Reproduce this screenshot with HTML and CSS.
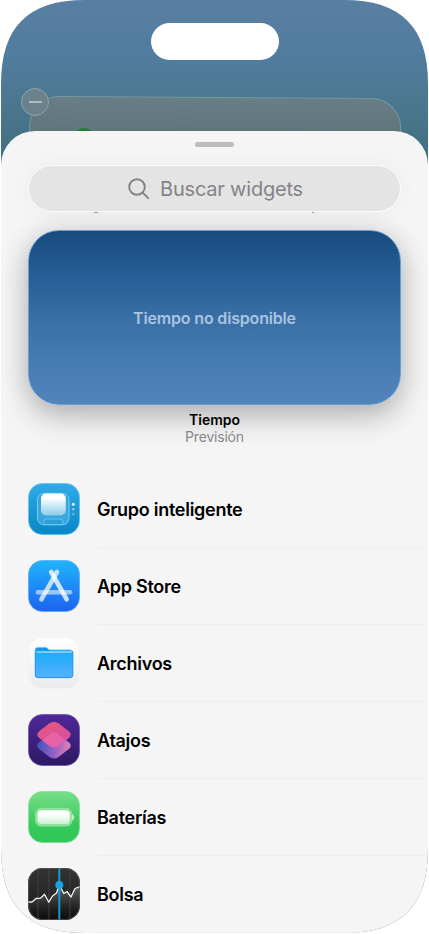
FILE: index.html
```html
<!DOCTYPE html>
<html lang="es">
  <head>
    <meta charset="UTF-8" />
    <meta name="viewport" content="width=device-width, initial-scale=1.0" />
    <title>Widgets</title>
    <link rel="stylesheet" href="styles.css">
  </head>
  <body>
    <div class="phone">
      <div class="island"></div>
      <div class="home-widget"><span class="home-dot"></span></div>
      <div class="remove"></div>

      <div class="sheet">
        <div class="grabber"></div>
        <div class="search">
          <svg class="search-icon" viewBox="0 0 22 22">
            <circle cx="9" cy="9" r="7.8" />
            <path d="M14.7 14.7L20.2 20.2" />
          </svg>
          <span class="search-text">Buscar widgets</span>
          <i class="peek peek-left"></i>
          <i class="peek peek-right"></i>
        </div>

        <div class="weather"><span class="weather-text">Tiempo no disponible</span></div>
        <div class="caption">
          <strong class="caption-title">Tiempo</strong>
          <span class="caption-sub">Previsión</span>
        </div>

        <ul class="apps">
          <li class="app">
            <svg class="icon" viewBox="0 0 52 52">
              <defs>
                <linearGradient id="stackBg" x1="0" y1="0" x2="0" y2="1"><stop offset="0" stop-color="#32aae8" /><stop offset="1" stop-color="#0687c6" /></linearGradient>
                <linearGradient id="stackCard" x1="0" y1="0" x2="0" y2="1"><stop offset="0.2" stop-color="#fff" /><stop offset="1" stop-color="#8bcceb" /></linearGradient>
              </defs>
              <rect class="edge" x="0.5" y="0.5" width="51" height="51" rx="14" fill="url(#stackBg)" stroke="#5cc0f0" />
              <rect x="9.5" y="10.3" width="31.5" height="31.5" rx="6.5" fill="#38a5dc" stroke="#74cdf3" />
              <path d="M16 41.5v-2.5q0-3 3-3h13q3 0 3 3v2.5z" fill="#2d9fd7" stroke="#74cdf3" stroke-width="0.8" />
              <rect x="13" y="10.5" width="24.8" height="22" rx="5" fill="url(#stackCard)" />
              <circle cx="45.3" cy="21.2" r="1.5" fill="#e4f6ff" />
              <circle cx="45.3" cy="26.2" r="1.3" fill="#84ccef" />
              <circle cx="45.3" cy="31.1" r="1.3" fill="#5fb9e4" />
            </svg>
            <span class="name">Grupo inteligente</span>
          </li>
          <li class="app">
            <svg class="icon" viewBox="0 0 52 52">
              <defs>
                <linearGradient id="storeBg" x1="0" y1="0" x2="0" y2="1"><stop offset="0" stop-color="#20b4fb" /><stop offset="1" stop-color="#1d63f0" /></linearGradient>
              </defs>
              <rect class="edge" x="0.5" y="0.5" width="51" height="51" rx="14" fill="url(#storeBg)" stroke="#4fabff" />
              <g fill="none" stroke="#fff" stroke-width="4.6" stroke-linecap="round">
                <path d="M10 32.2H42" stroke-opacity="0.55" />
                <path d="M29 12L13.4 39.3" stroke-opacity="0.72" />
                <path d="M23.2 12L38.7 39.3" stroke-opacity="0.78" />
              </g>
            </svg>
            <span class="name">App Store</span>
          </li>
          <li class="app">
            <svg class="icon" viewBox="0 0 52 52">
              <defs>
                <linearGradient id="filesBg" x1="0" y1="0" x2="0" y2="1"><stop offset="0" stop-color="#fff" /><stop offset="1" stop-color="#ebebee" /></linearGradient>
                <linearGradient id="folder" x1="0" y1="0" x2="0" y2="1"><stop offset="0" stop-color="#19aefa" /><stop offset="1" stop-color="#56b0fe" /></linearGradient>
              </defs>
              <rect class="edge" x="0.5" y="0.5" width="51" height="51" rx="14" fill="url(#filesBg)" stroke="#f0f0f1" />
              <path d="M7 38V13q0-2.8 2.8-2.8h7.4q1.6 0 2.6 1.3t2.6 1.3H42q3 0 3 3V38q0 3-3 3H10q-3 0-3-3z" fill="#1499ee" stroke="#b9dcfc" stroke-width="0.6" />
              <path d="M7.3 14.8H44.8V38q0 2.6-2.8 2.6H10q-2.7 0-2.7-2.6z" fill="url(#folder)" stroke="#258fee" stroke-width="0.8" />
              <path d="M8.4 15H43.8" stroke="#98dcff" stroke-width="1.4" />
            </svg>
            <span class="name">Archivos</span>
          </li>
          <li class="app">
            <svg class="icon" viewBox="0 0 52 52">
              <defs>
                <linearGradient id="cutsBg" x1="0" y1="0" x2="0" y2="1"><stop offset="0" stop-color="#50289a" /><stop offset="1" stop-color="#2b1962" /></linearGradient>
                <linearGradient id="cutsTop" x1="0" y1="0" x2="0.4" y2="1"><stop offset="0" stop-color="#ea5a72" /><stop offset="1" stop-color="#d44cab" /></linearGradient>
                <linearGradient id="cutsBottom" x1="0" y1="0.4" x2="1" y2="0.5"><stop offset="0" stop-color="#4053bd" /><stop offset="0.5" stop-color="#8e5fc6" /><stop offset="1" stop-color="#e77fb6" /></linearGradient>
              </defs>
              <rect class="edge" x="0.5" y="0.5" width="51" height="51" rx="14" fill="url(#cutsBg)" stroke="#6c48ac" />
              <path d="M11.5 28L21.5 20.5q4.5-3.2 9 0L40.5 28q4.6 3.6 0 7.2L30.5 42.9q-4.5 3.2-9 0L11.5 35.2q-4.6-3.6 0-7.2z" fill="url(#cutsBottom)" />
              <path d="M11.5 17L21.5 9.3q4.5-3.2 9 0L40.5 17q4.6 3.6 0 7.2L30.5 31.9q-4.5 3.2-9 0L11.5 24.2q-4.6-3.6 0-7.2z" fill="url(#cutsTop)" />
              <path d="M26 18.2q2.4 0 4.5 2.3L37.8 26.2 30.5 31.9q-4.5 3.2-9 0L14.2 26.2 21.5 20.5q2.1-2.3 4.5-2.3z" fill="#f77ab0" fill-opacity="0.45" />
            </svg>
            <span class="name">Atajos</span>
          </li>
          <li class="app">
            <svg class="icon" viewBox="0 0 52 52">
              <defs>
                <linearGradient id="batBg" x1="0" y1="0" x2="0" y2="1"><stop offset="0" stop-color="#79df8a" /><stop offset="0.65" stop-color="#37c95b" /><stop offset="1" stop-color="#30c656" /></linearGradient>
                <linearGradient id="batFill" x1="0" y1="0" x2="0" y2="1"><stop offset="0.3" stop-color="#fff" /><stop offset="1" stop-color="#cbf0d2" /></linearGradient>
              </defs>
              <rect class="edge" x="0.5" y="0.5" width="51" height="51" rx="14" fill="url(#batBg)" stroke="#7ce092" />
              <path d="M43 22.2q3.2 1.3 3.2 4t-3.2 4z" fill="#c4efcc" />
              <rect x="7.5" y="17.3" width="36.3" height="17.8" rx="5.5" fill="#8be09b" stroke="#a4e8b0" stroke-width="0.7" />
              <rect x="9.5" y="19.3" width="32.3" height="13.8" rx="4" fill="url(#batFill)" />
            </svg>
            <span class="name">Baterías</span>
          </li>
          <li class="app">
            <svg class="icon" viewBox="0 0 52 52">
              <defs>
                <linearGradient id="stockBg" x1="0" y1="0" x2="0" y2="1"><stop offset="0" stop-color="#333" /><stop offset="0.6" stop-color="#242424" /><stop offset="1" stop-color="#0c0c0c" /></linearGradient>
                <linearGradient id="stockArea" x1="0" y1="0" x2="0" y2="1"><stop offset="0" stop-color="#777" stop-opacity="0.85" /><stop offset="1" stop-color="#111" stop-opacity="0" /></linearGradient>
                <clipPath id="stockClip"><rect width="52" height="52" rx="14.5" /></clipPath>
              </defs>
              <g clip-path="url(#stockClip)">
                <rect width="52" height="52" fill="url(#stockBg)" />
                <path d="M0 34H4L8 30.5 12.5 30.2 16.5 26.3 20.8 34.2 24.5 28 28.5 25 31.3 17 35.8 25.5 39 23.5 43 29 47 20.5 52 18.5V52H0z" fill="url(#stockArea)" />
                <path d="M10 0V52M21 0V52M42 0V52" stroke="#484848" stroke-width="0.8" />
                <path d="M31.3 0V52" stroke="#159bd3" stroke-width="2" />
                <path d="M0 34H4L8 30.5 12.5 30.2 16.5 26.3 20.8 34.2 24.5 28 28.5 25 31.3 17 35.8 25.5 39 23.5 43 29 47 20.5 52 18.5" fill="none" stroke="#f1f1f1" stroke-width="1.3" stroke-linejoin="round" />
                <circle cx="31.3" cy="17" r="4" fill="#13a5e8" />
              </g>
              <rect x="0.5" y="0.5" width="51" height="51" rx="14" fill="none" stroke="#5b5b5b" stroke-width="0.7" />
            </svg>
            <span class="name">Bolsa</span>
          </li>
        </ul>
      </div>
    </div>
  </body>
</html>
```
FILE: styles.css
```css
* {
  padding: 0;
  margin: 0;
  list-style: none;
  box-sizing: border-box;
}
body {
  background-color: #fff;
  font-family: Inter, "Liberation Sans", sans-serif;
  overflow: hidden;
}
.phone {
  position: relative;
  width: 427px;
  height: 933px;
  margin-left: 1px;
  padding-top: 23px;
  overflow: hidden;
  background: linear-gradient(#587fa1 0, #507c9e 60px, #4b788f 100px, #406f7e 160px);
  /* smooth corners, softer than a plain radius */
  clip-path: path("M0 84C0 27 27 0 84 0H343C400 0 427 27 427 84V849C427 906 400 933 343 933H84C27 933 0 906 0 849Z");
}
.island {
  width: 128px;
  height: 37px;
  margin: 0 auto;
  border-radius: 19px;
  background-color: #fff;
}
/* the widget being edited, under the sheet */
.home-widget {
  position: absolute;
  top: 96.5px;
  left: 28px;
  width: 372px;
  height: 120px;
  border: 1px solid #7798a2;
  border-radius: 30px;
  background: linear-gradient(#677e86, #5e757a 36px);
  transform: rotate(0.35deg);
}
.home-dot {
  position: absolute;
  top: 31px;
  left: 42px;
  width: 24px;
  height: 24px;
  border-radius: 50%;
  background-color: #217e35;
}
.remove {
  position: absolute;
  top: 88px;
  left: 20px;
  width: 28px;
  height: 28px;
  display: flex;
  align-items: center;
  justify-content: center;
  border: 1px solid #8ba4ad;
  border-radius: 50%;
  background-color: #6b828c;
}
.remove::before {
  content: "";
  width: 13px;
  height: 2px;
  background-color: #b0bdc0;
}
.sheet {
  position: relative;
  height: 803px;
  margin-top: 70.5px;
  padding-top: 11px;
  border-radius: 34px 34px 0 0;
  background-color: #f5f5f6;
}
.grabber {
  width: 39px;
  height: 5px;
  margin: 0 auto;
  border-radius: 3px;
  background-color: #bcbcbd;
}
.search {
  position: relative;
  z-index: 1;
  display: flex;
  align-items: center;
  justify-content: center;
  gap: 10px;
  width: 373px;
  height: 47px;
  margin: 18.5px 0 0 27px;
  padding-left: 2px;
  border: 1px solid #fcfcfc;
  border-radius: 24px;
  background-color: #e4e4e4;
  box-shadow: 0 0 22px rgba(0, 0, 0, 0.045);
}
.search-icon {
  width: 22px;
  height: 22px;
  fill: none;
  stroke: #838387;
  stroke-width: 1.9;
  stroke-linecap: round;
}
.search-text {
  color: #838387;
  font-size: 20px;
  line-height: 24px;
  letter-spacing: -0.2px;
}
/* tips of the letters scrolled behind the field */
.peek {
  position: absolute;
  bottom: -2px;
  height: 1px;
  background-color: #999;
}
.peek-left {
  left: 65px;
  width: 4px;
}
.peek-right {
  left: 283px;
  width: 2px;
}
.weather {
  display: flex;
  align-items: center;
  justify-content: center;
  width: 373px;
  height: 175px;
  margin: 18px 0 0 27px;
  border: 1px solid #67a0d3;
  border-radius: 31px;
  background: linear-gradient(#184b7e, #275d94 25%, #3a6fa5 50%, #487db4 78%, #5184bb);
  box-shadow: 0 12px 30px rgba(0, 0, 0, 0.24), 0 0 28px rgba(0, 0, 0, 0.09);
}
.weather-text {
  color: #a8c4e0;
  font-size: 16px;
  font-weight: 600;
  letter-spacing: -0.17px;
}
.caption {
  position: relative;
  display: flex;
  flex-direction: column;
  align-items: center;
  height: 65.5px;
  padding-top: 6px;
}
.caption-title {
  font-size: 14px;
  line-height: 17px;
  font-weight: 600;
}
.caption-sub {
  color: #87878a;
  font-size: 14px;
  line-height: 17px;
  letter-spacing: -0.2px;
}
.app {
  display: flex;
  align-items: center;
  height: 77px;
  padding-left: 27px;
}
.icon {
  flex: none;
  width: 52px;
  height: 52px;
  margin-right: 17px;
}
.edge {
  stroke-width: 0.7;
}
.name {
  flex: 1;
  height: 77px;
  border-bottom: 1px solid #eeeeef;
  font-size: 18px;
  font-weight: 600;
  line-height: 77px;
  letter-spacing: -0.27px;
}
```
